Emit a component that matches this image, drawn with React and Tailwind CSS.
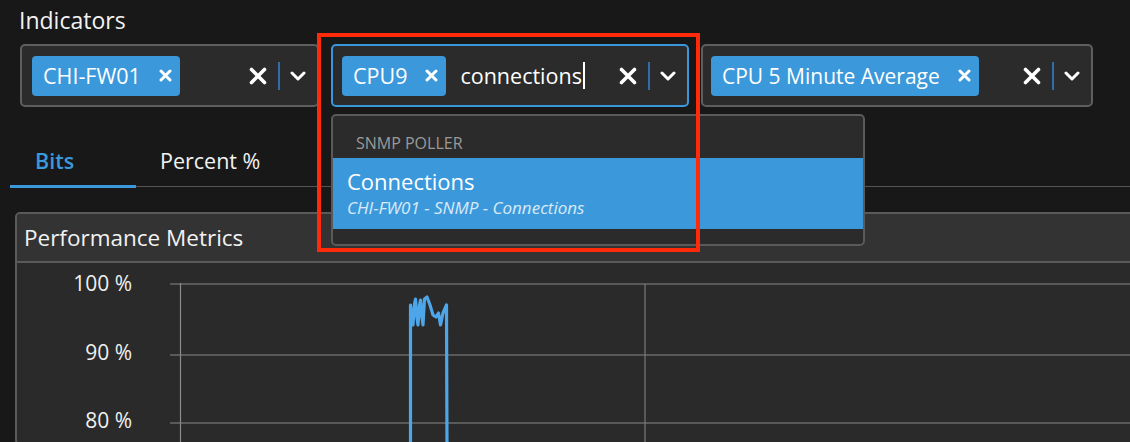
import React from "react";

const ChipX = () => (
  <svg width="13" height="13" viewBox="0 0 13 13">
    <path d="M2 2L11 11M11 2L2 11" stroke="white" strokeWidth="3" strokeLinecap="round" />
  </svg>
);

const ClearX = () => (
  <svg width="20" height="18" viewBox="0 0 20 18">
    <path d="M3.5 2.5L16.5 15.5M16.5 2.5L3.5 15.5" stroke="white" strokeWidth="3.6" strokeLinecap="round" />
  </svg>
);

const Chevron = () => (
  <svg width="16" height="10" viewBox="0 0 16 10">
    <path d="M2 2L8 8L14 2" stroke="white" strokeWidth="3" strokeLinecap="round" strokeLinejoin="round" fill="none" />
  </svg>
);

const Chip = ({ label, small }) => (
  <div className="flex h-[40px] shrink-0 items-center rounded-[4px] bg-[#3a98db] pl-[11px] pr-[8px]">
    <span className={small ? "text-[21px] leading-[28px] text-white" : "text-[21.5px] leading-[28px] text-white"}>
      {label}
    </span>
    <span className="ml-[18px] flex items-center">
      <ChipX />
    </span>
  </div>
);

const Controls = () => (
  <div className="ml-auto flex shrink-0 items-center">
    <ClearX />
    <div className="mx-[10px] h-[28px] w-[2px] bg-[#2f6ea6]" />
    <Chevron />
  </div>
);

export default function App() {
  return (
    <div className="relative h-[442px] w-[1130px] overflow-hidden bg-[#181818] font-['Open_Sans',sans-serif] text-white">
      <div className="pl-[19px] pt-[6px] text-[23px] leading-[28px] text-[#f2f2f2]">Indicators</div>

      <div className="mt-[10px] flex gap-[12px] pl-[20px]">
        <div className="flex h-[63px] w-[299px] items-center rounded-[5px] border-2 border-[#5e5e5e] bg-[#2b2b2b] pl-[10px] pr-[11px]">
          <Chip label="CHI-FW01" />
          <Controls />
        </div>

        <div className="relative">
          <div className="flex h-[63px] w-[358px] items-center rounded-[5px] border-2 border-[#3b97dc] bg-[#2b2b2b] pl-[9px] pr-[11px]">
            <Chip label="CPU9" />
            <span className="ml-[14px] text-[21.5px] leading-[28px] text-white">connections</span>
            <span className="ml-[1px] h-[27px] w-[2px] bg-white" />
            <Controls />
          </div>

          <div className="absolute left-0 top-[70px] z-10 h-[132px] w-[534px] rounded-[5px] border-2 border-[#5a5a5a] bg-[#2b2b2b]">
            <div className="flex h-[42px] items-center pl-[23px] pt-[11px] text-[16px] leading-[22px] text-[#9a9a9a]">
              SNMP POLLER
            </div>
            <div className="flex h-[71px] flex-col bg-[#3a98db] pb-[7px] pl-[14px] pt-[10px]">
              <span className="text-[22px] leading-[26px] text-white">Connections</span>
              <span className="text-[17px] italic leading-[28px] text-white/80">
                CHI-FW01 - SNMP - Connections
              </span>
            </div>
          </div>
        </div>

        <div className="flex h-[63px] w-[392px] items-center rounded-[5px] border-2 border-[#5e5e5e] bg-[#2b2b2b] pl-[8px] pr-[11px]">
          <Chip label="CPU 5 Minute Average" small />
          <Controls />
        </div>
      </div>

      <div className="ml-[10px] mt-[40px] flex border-b border-[#555555]">
        <div className="-mb-[2px] w-[126px] border-b-[3px] border-[#3a98db] pb-[10px] pl-[25px] text-[21.5px] font-semibold leading-[28px] text-[#3a98db]">
          Bits
        </div>
        <div className="w-[126px] pb-[10px] pl-[24px] text-[21.5px] leading-[28px] text-[#f2f2f2]">Percent %</div>
      </div>

      <div className="ml-[15px] mt-[25px] w-[1140px] overflow-hidden rounded-[5px] border-2 border-[#5a5a5a] bg-[#2a2a2a]">
        <div className="flex h-[49px] items-center border-b-2 border-[#5a5a5a] bg-[#333333] pl-[7px] text-[22.5px] leading-[28px] text-[#f2f2f2]">
          Performance Metrics
        </div>
        <svg width="1138" height="180" viewBox="17 263 1138 180" className="block">
          <g stroke="#6a6a6a" strokeWidth="1.5">
            <line x1="170" y1="284" x2="1160" y2="284" />
            <line x1="170" y1="355" x2="1160" y2="355" />
            <line x1="170" y1="423" x2="1160" y2="423" />
          </g>
          <line x1="180.5" y1="283" x2="180.5" y2="450" stroke="#8a8a8a" strokeWidth="1.2" />
          <line x1="645" y1="284" x2="645" y2="450" stroke="#7a7a7a" strokeWidth="1.2" />
          <g fill="#f0f0f0" fontSize="21" textAnchor="end">
            <text x="132" y="290.5">100 %</text>
            <text x="132" y="359.5">90 %</text>
            <text x="132" y="428">80 %</text>
          </g>
          <path
            d="M410.5 450 L410.5 305 L412 318 L413 325 L414.5 304 L415.5 299 L417 318 L418 325 L419.5 305 L420.5 300 L422 318 L423 325 L424.5 299 L427 297 L430 305 L433 315 L436 317 L438.5 313 L440.5 325 L443 313 L446.5 305 L447 450"
            fill="none"
            stroke="#4ea6ea"
            strokeWidth="3.2"
            strokeLinejoin="round"
          />
        </svg>
      </div>

      <div className="pointer-events-none absolute left-[317px] top-[33px] z-20 h-[219px] w-[383px] border-[4px] border-[#ff2a0a]" />
    </div>
  );
}
